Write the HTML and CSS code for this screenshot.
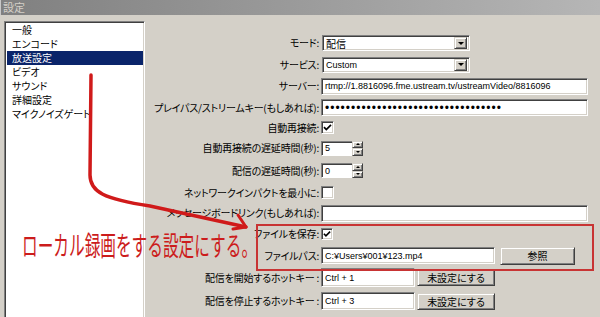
FILE: index.html
```html
<!DOCTYPE html>
<html lang="ja">
<head>
<meta charset="utf-8">
<title>設定</title>
<link rel="stylesheet" href="styles.css">
</head>
<body>
<div class="titlebar">設定</div>
<div class="main">
  <ul class="nav">
    <li>一般</li>
    <li>エンコード</li>
    <li class="sel">放送設定</li>
    <li>ビデオ</li>
    <li>サウンド</li>
    <li>詳細設定</li>
    <li>マイクノイズゲート</li>
  </ul>
  <div class="form">
    <label>モード:</label>
    <div class="ctl"><div class="combo"><span class="val">配信</span><span class="drop"><i></i></span></div></div>

    <label>サービス:</label>
    <div class="ctl"><div class="combo"><span class="val lat">Custom</span><span class="drop"><i></i></span></div></div>

    <label>サーバー:</label>
    <div class="ctl"><div class="field wide lat">rtmp://1.8816096.fme.ustream.tv/ustreamVideo/8816096</div></div>

    <label>プレイパス/ストリームキー(もしあれば):</label>
    <div class="ctl"><div class="field wide dots">••••••••••••••••••••••••••••••••••</div></div>

    <label>自動再接続:</label>
    <div class="ctl"><span class="check"><svg viewBox="0 0 9 9" width="9" height="9"><path d="M1 4.2 L3.3 6.6 L8 1.8" fill="none" stroke="#000" stroke-width="1.7"/></svg></span></div>

    <label>自動再接続の遅延時間(秒):</label>
    <div class="ctl"><div class="spin"><span class="field lat">5</span><span class="arrows"><span class="sb up"><i></i></span><span class="sb dn"><i></i></span></span></div></div>

    <label>配信の遅延時間(秒):</label>
    <div class="ctl"><div class="spin"><span class="field lat">0</span><span class="arrows"><span class="sb up"><i></i></span><span class="sb dn"><i></i></span></span></div></div>

    <label>ネットワークインパクトを最小に:</label>
    <div class="ctl"><span class="check"></span></div>

    <label>メッセージボードリンク(もしあれば):</label>
    <div class="ctl"><div class="field wide"></div></div>

    <label>ファイルを保存:</label>
    <div class="ctl"><span class="check small"><svg viewBox="0 0 9 9" width="8" height="8"><path d="M1 4.2 L3.3 6.6 L8 1.8" fill="none" stroke="#000" stroke-width="1.8"/></svg></span></div>

    <label>ファイルパス:</label>
    <div class="ctl"><div class="field path lat">C:¥Users¥001¥123.mp4</div><button class="btn browse">参照</button></div>

    <label>配信を開始するホットキー :</label>
    <div class="ctl"><div class="field hot lat">Ctrl + 1</div><button class="btn clear">未設定にする</button></div>

    <label>配信を停止するホットキー :</label>
    <div class="ctl"><div class="field hot2 lat">Ctrl + 3</div><button class="btn clear">未設定にする</button></div>
  </div>
</div>

<div class="note-box"></div>
<svg class="arrow" width="600" height="317" viewBox="0 0 600 317">
  <path d="M91 75 L90 175 C90 192 104 199 150 206 L246 227" fill="none" stroke="#d01a1a" stroke-width="3.5" stroke-linecap="round"/>
  <path d="M238 215 L246 227 L233 229" fill="none" stroke="#d01a1a" stroke-width="3" stroke-linecap="round" stroke-linejoin="round"/>
</svg>
<div class="note-text">ローカル録画をする設定にする。</div>
</body>
</html>
```
FILE: styles.css
```css
* { box-sizing: border-box; margin: 0; padding: 0; }
html, body { width: 600px; height: 317px; overflow: hidden; background: #d4d0c8; }
body {
  position: relative;
  font-family: "Noto Sans CJK JP", sans-serif;
  font-size: 10px;
  font-feature-settings: "palt";
  color: #000;
}
.titlebar {
  height: 15px;
  line-height: 15px;
  padding-left: 2px;
  font-size: 11px;
  color: #d4d0c8;
  background: linear-gradient(to right, #808080, #b6b6b6);
  border-left: 1px solid #c8c8c8;
}
.main { display: flex; height: 302px; }
.nav {
  list-style: none;
  margin: 6px 0 0 4px;
  width: 141px;
  height: 296px;
  padding: 1px 1px 0 2px;
  background: #fff;
  border: 1px solid;
  border-bottom: 0;
  border-color: #808080 #fff #fff #808080;
  box-shadow: inset 1px 1px #404040, inset -1px 0 #d4d0c8;
}
.nav li { height: 14px; line-height: 14px; padding-left: 5px; white-space: nowrap; }
.nav li.sel { background: #0a246a; color: #fff; }

.form {
  flex: 1;
  display: grid;
  grid-template-columns: 174px 1fr;
  grid-template-rows: 22px 21px 22px 21px 19px 22px 23px 21px 20px 22px 21px 23px 24px;
  column-gap: 2px;
  padding-top: 17px;
  align-items: center;
}
.form label { justify-self: end; white-space: nowrap; line-height: 12px; letter-spacing: -0.2px; }
.ctl { display: flex; align-items: center; }

.lat { font-family: "Liberation Sans", "Noto Sans CJK JP", sans-serif; font-size: 9px; font-feature-settings: normal; }

.field {
  background: #fff;
  border: 1px solid;
  border-color: #808080 #fff #fff #808080;
  box-shadow: inset 1px 1px #404040, inset -1px -1px #d4d0c8;
  padding: 0 3px;
  display: flex;
  align-items: center;
  white-space: nowrap;
  overflow: hidden;
}
.wide { width: 267px; height: 17px; }
.dots { font-family: "Liberation Sans", sans-serif; font-size: 12px; letter-spacing: 1px; }
.path { width: 174px; height: 17px; }
.hot { width: 94px; height: 19px; }
.hot2 { width: 94px; height: 18px; }

.combo {
  margin-left: 1px;
  width: 148px;
  height: 16px;
  display: flex;
  align-items: center;
  background: #fff;
  border: 1px solid;
  border-color: #808080 #fff #fff #808080;
  box-shadow: inset 1px 1px #404040, inset -1px -1px #d4d0c8;
  padding: 1px 2px 1px 3px;
}
.combo .val { flex: 1; }
.drop, .sb, .btn {
  background: #d4d0c8;
  border: 1px solid;
  border-color: #d4d0c8 #404040 #404040 #d4d0c8;
  box-shadow: inset 1px 1px #fff, inset -1px -1px #808080;
  display: flex;
  align-items: center;
  justify-content: center;
}
.drop { width: 13px; height: 12px; }
.drop i { width: 0; height: 0; border-left: 3px solid transparent; border-right: 3px solid transparent; border-top: 3px solid #000; }

.check {
  width: 13px;
  height: 13px;
  background: #fff;
  border: 1px solid;
  border-color: #808080 #fff #fff #808080;
  box-shadow: inset 1px 1px #404040, inset -1px -1px #d4d0c8;
  display: flex;
  align-items: center;
  justify-content: center;
}
.check.small { width: 12px; height: 12px; }

.spin { display: flex; width: 42px; height: 15px; }
.spin .field { width: 31px; height: 15px; border-right: 0; box-shadow: inset 1px 1px #404040; }
.arrows { display: flex; flex-direction: column; width: 11px; height: 15px; background: #fff; }
.sb { width: 11px; height: 7.5px; }
.sb i { width: 0; height: 0; border-left: 2px solid transparent; border-right: 2px solid transparent; }
.sb.up i { border-bottom: 2px solid #000; }
.sb.dn i { border-top: 2px solid #000; }

.btn {
  font-family: "Noto Sans CJK JP", sans-serif;
  font-size: 10px;
  font-feature-settings: "palt";
  color: #000;
}
.browse { width: 75px; height: 18px; margin-left: 5px; }
.clear { width: 78px; height: 17px; margin-left: 2px; }

.note-box {
  position: absolute;
  left: 256px;
  top: 224px;
  width: 338px;
  height: 47px;
  border: 2px solid #c83434;
}
.arrow { position: absolute; left: 0; top: 0; }
.note-text {
  position: absolute;
  left: 22px;
  top: 227px;
  font-size: 27px;
  line-height: 36px;
  color: #cc1c1c;
  white-space: nowrap;
  font-feature-settings: normal;
  transform: scaleX(0.58);
  transform-origin: 0 0;
}
```
